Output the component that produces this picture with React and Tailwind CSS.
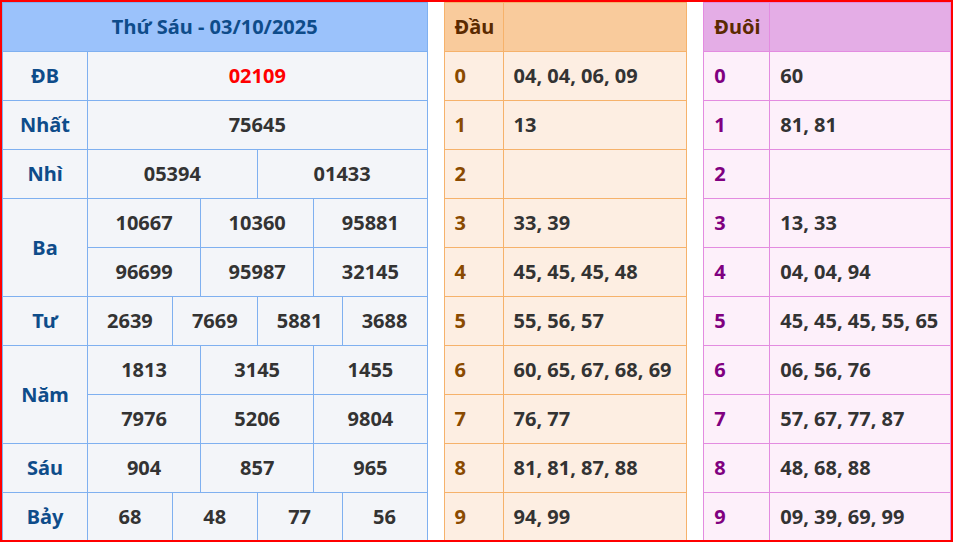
const dau = [["0","04, 04, 06, 09"],["1","13"],["2",""],["3","33, 39"],["4","45, 45, 45, 48"],["5","55, 56, 57"],["6","60, 65, 67, 68, 69"],["7","76, 77"],["8","81, 81, 87, 88"],["9","94, 99"]];
const duoi = [["0","60"],["1","81, 81"],["2",""],["3","13, 33"],["4","04, 04, 94"],["5","45, 45, 45, 55, 65"],["6","06, 56, 76"],["7","57, 67, 77, 87"],["8","48, 68, 88"],["9","09, 39, 69, 99"]];
const td = "border border-[#7fb0f0] h-[49px] text-center p-0";
function Row({ label, vals, span = 1, first = true, cols = 12 }) {
  const each = cols / vals.length;
  return (
    <tr>
      {first && <td rowSpan={span} className={td + " text-[#0e4c8a] w-[85px]"}>{label}</td>}
      {vals.map((v, i) => (
        <td key={i} colSpan={each} className={td + (label === "ĐB" ? " text-[#ff0000]" : " text-[#333]")}>{v}</td>
      ))}
    </tr>
  );
}
const themes = {
  dau: { table: "w-[244px]", head: "bg-[#f9cb9c]", row: "bg-[#fdeee2]", bd: "border-[#f6b26b]", dc: "text-[#8a4a00]", w1: "w-[59px]" },
  duoi: { table: "w-[248px]", head: "bg-[#e4ade6]", row: "bg-[#fdf0fa]", bd: "border-[#e38ce0]", dc: "text-[#800080]", w1: "w-[66px]" },
};
function Side({ title, rows, t }) {
  return (
    <table className={"border-collapse table-fixed " + t.table}>
      <tbody>
        <tr className={t.head}>
          <td className={"h-[49px] border text-left pl-[10px] text-[#5b2a00] " + t.bd + " " + t.w1}>{title}</td>
          <td className={"border " + t.bd}></td>
        </tr>
        {rows.map(([k, v]) => (
          <tr key={k} className={t.row}>
            <td className={"h-[49px] border pl-[10px] " + t.bd + " " + t.dc}>{k}</td>
            <td className={"h-[49px] border pl-[10px] text-[#333] " + t.bd}>{v}</td>
          </tr>
        ))}
      </tbody>
    </table>
  );
}
export default function App() {
  return (
    <div className="w-[953px] h-[542px] border-2 border-[#ff0000] bg-white flex gap-4 font-bold text-[20px] overflow-hidden font-['Liberation_Sans',Arial,sans-serif]">
      <table className="border-collapse table-fixed w-[426px] bg-[#f3f5f9]">
        <colgroup><col className="w-[85px]" />{Array.from({ length: 12 }).map((_, i) => <col key={i} />)}</colgroup>
        <tbody>
          <tr><td colSpan={13} className={td + " bg-[#9bc2fb] text-[#0e4c8a]"}>Thứ Sáu - 03/10/2025</td></tr>
          <Row label="ĐB" vals={["02109"]} />
          <Row label="Nhất" vals={["75645"]} />
          <Row label="Nhì" vals={["05394", "01433"]} />
          <Row label="Ba" span={2} vals={["10667", "10360", "95881"]} />
          <Row label="Ba" first={false} vals={["96699", "95987", "32145"]} />
          <Row label="Tư" vals={["2639", "7669", "5881", "3688"]} />
          <Row label="Năm" span={2} vals={["1813", "3145", "1455"]} />
          <Row label="Năm" first={false} vals={["7976", "5206", "9804"]} />
          <Row label="Sáu" vals={["904", "857", "965"]} />
          <Row label="Bảy" vals={["68", "48", "77", "56"]} />
        </tbody>
      </table>
      <Side title="Đầu" rows={dau} t={themes.dau} />
      <Side title="Đuôi" rows={duoi} t={themes.duoi} />
    </div>
  );
}
